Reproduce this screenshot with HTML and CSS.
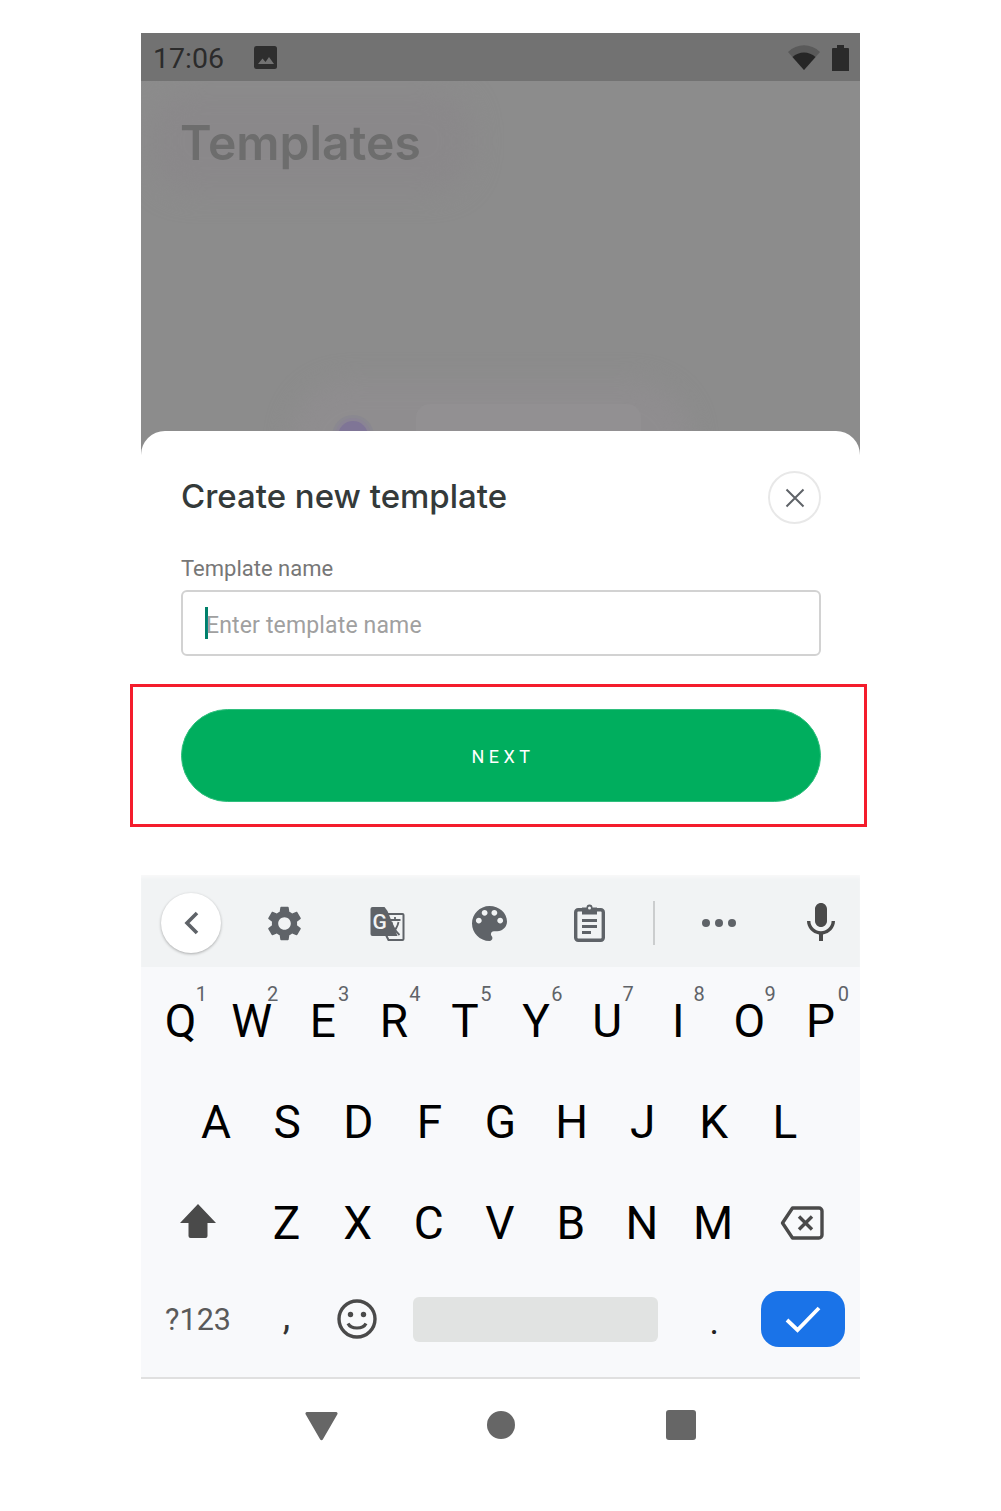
FILE: index.html
```html
<!DOCTYPE html>
<html lang="en">

<head>
  <meta charset="UTF-8">
  <meta name="viewport" content="width=device-width, initial-scale=1.0">
  <title>Create new template</title>
  <link rel="stylesheet" href="styles.css">
</head>

<body>
  <div class="phone">
    <!-- status bar -->
    <div class="status-bar">
      <span class="clock">17:06</span>
      <svg class="status-image" viewBox="0 0 23 23">
        <rect width="23" height="23" rx="2.5" fill="#2e2e2e" />
        <path d="M4 18l4.5-5.500 3 3.500 3.500-5 5 7z" fill="#727272" />
      </svg>
      <span class="status-space"></span>
      <svg class="status-wifi" viewBox="0 0 32 25">
        <path d="M0 7C9-2 23-2 32 7L16 25z" fill="#5a5a5a" />
        <path d="M4.500 12C11 6 21 6 27.500 12L16 25z" fill="#262626" />
      </svg>
      <svg class="status-battery" viewBox="0 0 17 26">
        <path d="M5 0h7v3h4a1 1 0 0 1 1 1v22H0V4a1 1 0 0 1 1-1h4z" fill="#2a2a2a" />
      </svg>
    </div>

    <!-- dimmed page behind the sheet -->
    <div class="screen">
      <div class="ghost-head"></div>
      <h1 class="screen-title">Templates</h1>
      <div class="ghost-glow"></div>
      <div class="ghost-card"></div>
      <div class="ghost-dot"></div>
    </div>

    <!-- bottom sheet -->
    <div class="sheet">
      <div class="sheet-head">
        <h2 class="sheet-title">Create new template</h2>
        <button class="close-btn">
          <svg viewBox="0 0 20 20" width="20" height="20">
            <path d="M1.500 1.500l17 17M18.500 1.500l-17 17" stroke="#5f6368" stroke-width="2" fill="none" />
          </svg>
        </button>
      </div>
      <label class="field-label">Template name</label>
      <div class="field">
        <span class="caret"></span>
        <span class="placeholder">Enter template name</span>
      </div>
      <button class="next-btn">NEXT</button>
    </div>

    <!-- keyboard -->
    <div class="toolbar">
      <div class="back-btn">
        <svg viewBox="0 0 16 24" width="16" height="24">
          <path d="M14 2L4 12l10 10" stroke="#5f6368" stroke-width="3.600" fill="none" />
        </svg>
      </div>
      <svg class="tool tool-gear" viewBox="2 2 20 20">
        <path d="M19.140 12.940c.04-.3.06-.61.06-.94 0-.32-.02-.64-.07-.94l2.030-1.580c.18-.14.23-.41.12-.61l-1.920-3.320c-.12-.22-.37-.29-.59-.22l-2.390.96c-.5-.38-1.030-.7-1.620-.94l-.36-2.540c-.04-.24-.24-.41-.48-.41h-3.840c-.24 0-.43.17-.47.41l-.36 2.540c-.59.24-1.130.57-1.620.94l-2.390-.96c-.22-.08-.47 0-.59.22L2.740 8.870c-.12.21-.08.47.12.61l2.030 1.580c-.05.3-.09.63-.09.94s.02.64.07.94l-2.030 1.580c-.18.14-.23.41-.12.61l1.920 3.320c.12.22.37.29.59.22l2.390-.96c.5.38 1.030.7 1.620.94l.36 2.540c.05.24.24.41.48.41h3.840c.24 0 .44-.17.47-.41l.36-2.540c.59-.24 1.130-.56 1.620-.94l2.390.96c.22.08.47 0 .59-.22l1.920-3.320c.12-.22.07-.47-.12-.61l-2.010-1.580zM12 15.600c-1.980 0-3.600-1.620-3.600-3.600s1.620-3.600 3.600-3.600 3.600 1.620 3.600 3.600-1.620 3.600-3.600 3.600z" fill="#5f6368" />
      </svg>
      <svg class="tool tool-translate" viewBox="0 0 34 34">
        <path d="M15 7h17a1 1 0 0 1 1 1v24a1 1 0 0 1-1 1H18l-3-6z" fill="#f1f3f4" stroke="#5f6368" stroke-width="2" />
        <path d="M2 0h12l3 4 10 25H2a2 2 0 0 1-2-2V2a2 2 0 0 1 2-2z" fill="#5f6368" />
        <text x="2" y="22" class="translate-g">G</text>
        <path d="M19 13h11M24.500 10v3M21 15c1 6 5 10 8 13M28 15c-1 6-4 9-7 12" stroke="#5f6368" stroke-width="1.800" fill="none" />
      </svg>
      <svg class="tool tool-palette" viewBox="3 3 18 18">
        <path d="M12 3c-4.970 0-9 4.030-9 9s4.030 9 9 9c.83 0 1.500-.67 1.500-1.500 0-.39-.15-.74-.39-1.010-.23-.26-.38-.61-.38-.99 0-.83.67-1.500 1.500-1.500H16c2.760 0 5-2.240 5-5 0-4.420-4.030-8-9-8zm-5.500 9c-.83 0-1.500-.67-1.500-1.500S5.670 9 6.500 9 8 9.670 8 10.500 7.330 12 6.500 12zm3-4C8.670 8 8 7.330 8 6.500S8.670 5 9.500 5s1.500.67 1.500 1.500S10.330 8 9.500 8zm5 0c-.83 0-1.500-.67-1.500-1.500S13.670 5 14.500 5s1.500.67 1.500 1.500S15.330 8 14.500 8zm3 4c-.83 0-1.500-.67-1.500-1.500S16.670 9 17.500 9s1.500.67 1.500 1.500-.67 1.500-1.500 1.500z" fill="#5f6368" />
      </svg>
      <svg class="tool tool-clip" viewBox="0 0 31 38">
        <rect x="1.700" y="5.700" width="27.600" height="30.600" rx="2.500" fill="none" stroke="#5f6368" stroke-width="3.400" />
        <path d="M8 3.500h4.500a3 3 0 0 1 6 0H23v7H8z" fill="#5f6368" />
        <circle cx="15.500" cy="4" r="1.500" fill="#f1f3f4" />
        <path d="M8 16.500h15M8 22.500h15M8 28.500h9" stroke="#5f6368" stroke-width="3" fill="none" />
      </svg>
      <span class="tool-divider"></span>
      <svg class="tool tool-dots" viewBox="0 0 34 8">
        <circle cx="4" cy="4" r="4" fill="#5f6368" />
        <circle cx="17" cy="4" r="4" fill="#5f6368" />
        <circle cx="30" cy="4" r="4" fill="#5f6368" />
      </svg>
      <svg class="tool tool-mic" viewBox="5 2 14 19">
        <path d="M12 14c1.660 0 3-1.340 3-3V5c0-1.660-1.340-3-3-3S9 3.340 9 5v6c0 1.660 1.340 3 3 3zm5.300-3c0 3-2.540 5.100-5.300 5.100S6.700 14 6.700 11H5c0 3.410 2.720 6.230 6 6.720V21h2v-3.280c3.280-.48 6-3.300 6-6.720h-1.700z" fill="#4a4a4a" />
      </svg>
    </div>

    <div class="keys">
      <div class="row">
        <div class="key">Q<span class="hint">1</span></div>
        <div class="key">W<span class="hint">2</span></div>
        <div class="key">E<span class="hint">3</span></div>
        <div class="key">R<span class="hint">4</span></div>
        <div class="key">T<span class="hint">5</span></div>
        <div class="key">Y<span class="hint">6</span></div>
        <div class="key">U<span class="hint">7</span></div>
        <div class="key">I<span class="hint">8</span></div>
        <div class="key">O<span class="hint">9</span></div>
        <div class="key">P<span class="hint">0</span></div>
      </div>
      <div class="row row-center">
        <div class="key">A</div>
        <div class="key">S</div>
        <div class="key">D</div>
        <div class="key">F</div>
        <div class="key">G</div>
        <div class="key">H</div>
        <div class="key">J</div>
        <div class="key">K</div>
        <div class="key">L</div>
      </div>
      <div class="row">
        <div class="key key-wide">
          <svg class="shift-icon" viewBox="0 0 36 34" width="36" height="34">
            <path d="M18 0l18 19h-8.500v13a2 2 0 0 1-2 2h-15a2 2 0 0 1-2-2V19H0z" fill="#4a4a4a" />
          </svg>
        </div>
        <div class="key">Z</div>
        <div class="key">X</div>
        <div class="key">C</div>
        <div class="key">V</div>
        <div class="key">B</div>
        <div class="key">N</div>
        <div class="key">M</div>
        <div class="key key-wide">
          <svg viewBox="0 0 44 34" width="44" height="34">
            <path d="M12.500 2H39a3 3 0 0 1 3 3v24a3 3 0 0 1-3 3H12.500L2.500 17z" fill="none" stroke="#4a4a4a" stroke-width="3.400" stroke-linejoin="round" />
            <path d="M19 10.500l13 13M32 10.500l-13 13" stroke="#4a4a4a" stroke-width="3.400" fill="none" />
          </svg>
        </div>
      </div>
      <div class="row row-last">
        <div class="key key-wide key-symbols">?123</div>
        <div class="key key-comma">,</div>
        <div class="key">
          <svg class="emoji-icon" viewBox="0 0 40 40" width="40" height="40">
            <circle cx="20" cy="20" r="18" fill="none" stroke="#4a4a4a" stroke-width="3.400" />
            <circle cx="13.500" cy="15.500" r="2.700" fill="#4a4a4a" />
            <circle cx="26.500" cy="15.500" r="2.700" fill="#4a4a4a" />
            <path d="M11 24.500c3 6 15 6 18 0" fill="none" stroke="#4a4a4a" stroke-width="3.200" />
          </svg>
        </div>
        <div class="key-space"><span class="space-bar"></span></div>
        <div class="key key-period">.</div>
        <div class="key key-wide">
          <span class="enter">
            <svg viewBox="0 0 36 28" width="36" height="28">
              <path d="M2 15l10.500 10L34 3" fill="none" stroke="#fff" stroke-width="3.800" />
            </svg>
          </span>
        </div>
      </div>
    </div>

    <!-- nav bar -->
    <div class="nav-bar">
      <svg class="nav-back" viewBox="0 0 33 29" width="33" height="29">
        <path d="M2 0h29a1.500 1.500 0 0 1 1.400 2.200L17.800 27.600a1.500 1.500 0 0 1-2.600 0L.6 2.200A1.500 1.500 0 0 1 2 0z" fill="#666" />
      </svg>
      <span class="nav-circle"></span>
      <span class="nav-square"></span>
    </div>

    <!-- annotation over the button -->
    <div class="highlight"></div>
  </div>
</body>

</html>
```

FILE: styles.css
```css
* {
  box-sizing: border-box;
}

body {
  margin: 0;
  background: white;
  font-family: 'Roboto', sans-serif;
}

.phone {
  position: relative;
  width: 719px;
  margin: 33px 0 0 141px;
  display: flex;
  flex-direction: column;
}

.status-bar {
  height: 48px;
  background: #727272;
  display: flex;
  align-items: center;
  padding: 2px 11px 0 12px;
}

.clock {
  font-size: 28.500px;
  color: #2b2b2b;
  width: 101px;
}

.status-image {
  width: 23px;
  height: 23px;
  margin-top: -2px;
}

.status-space {
  flex: 1;
}

.status-wifi {
  width: 32px;
  height: 25px;
  margin-right: 12px;
  margin-top: -2px;
}

.status-battery {
  width: 17px;
  height: 26px;
  margin-top: -1px;
}

.screen {
  position: relative;
  height: 374px;
  background: #8c8c8c;
  overflow: hidden;
  padding: 34px 39px 0;
}

.screen-title {
  position: relative;
  margin: 0;
  font-family: 'Inter', sans-serif;
  font-size: 48px;
  font-weight: 600;
  line-height: 56px;
  color: #6d6d6d;
  filter: blur(.6px);
}

.ghost-head {
  position: absolute;
  left: 10px;
  top: 10px;
  width: 320px;
  height: 100px;
  border-radius: 40px;
  background: #8a888a;
  filter: blur(14px);
}

.ghost-glow {
  position: absolute;
  left: 150px;
  top: 300px;
  width: 400px;
  height: 120px;
  border-radius: 60px;
  background: #8f8d8f;
  filter: blur(12px);
}

.ghost-card {
  position: absolute;
  left: 275px;
  top: 323px;
  width: 225px;
  height: 60px;
  border-radius: 14px;
  background: #929092;
}

.ghost-dot {
  position: absolute;
  left: 197px;
  top: 340px;
  width: 30px;
  height: 30px;
  border-radius: 50%;
  background: #7f7596;
  box-shadow: 0 0 0 3px #8a8494, 0 0 0 6px #8a8890;
}

.sheet {
  background: white;
  height: 444px;
  margin-top: -24px;
  border-radius: 24px 24px 0 0;
  padding: 40px 39px 0 40px;
  position: relative;
}

.sheet-head {
  display: flex;
  align-items: center;
  justify-content: space-between;
  height: 53px;
}

.sheet-title {
  margin: 0 0 4px;
  font-family: 'Inter', sans-serif;
  font-size: 33px;
  font-weight: 500;
  color: #343a3a;
}

.close-btn {
  width: 53px;
  height: 53px;
  padding: 0;
  background: white;
  border: 2px solid #e8e8e8;
  border-radius: 50%;
  display: flex;
  align-items: center;
  justify-content: center;
}

.field-label {
  display: block;
  margin-top: 30px;
  font-size: 22px;
  line-height: 30px;
  color: #777;
}

.field {
  margin-top: 6px;
  height: 66px;
  border: 2px solid #d2d2d2;
  border-radius: 6px;
  display: flex;
  align-items: center;
  padding: 4px 0 0 22px;
}

.caret {
  width: 3px;
  height: 32px;
  margin-top: -4px;
  background: #00806a;
  margin-right: -2px;
}

.placeholder {
  font-size: 23px;
  letter-spacing: .15px;
  color: #a0a0a0;
}

.next-btn {
  display: block;
  width: 100%;
  height: 93px;
  margin-top: 53px;
  padding: 2px 0 0 4px;
  background: #00ae5e;
  border: 1px solid #2fbf7d;
  border-radius: 47px;
  color: white;
  font-family: 'Roboto', sans-serif;
  font-size: 18px;
  font-weight: 400;
  letter-spacing: 4.500px;
}

.highlight {
  position: absolute;
  left: -11px;
  top: 651px;
  width: 737px;
  height: 143px;
  border: 3px solid #f41c2c;
}

.toolbar {
  position: relative;
  height: 92px;
  background: #f1f3f4;
  box-shadow: inset 0 4px 4px -2px #fafafa;
}

/* toolbar items sit on a strip, each at its own spot */
.back-btn {
  position: absolute;
  left: 20px;
  top: 18px;
  width: 60px;
  height: 60px;
  border-radius: 50%;
  background: white;
  box-shadow: 0 1px 3px rgba(0, 0, 0, .3);
  display: flex;
  align-items: center;
  justify-content: center;
}

.tool {
  position: absolute;
}

.tool-gear {
  left: 126px;
  top: 31px;
  width: 35px;
  height: 35px;
}

.tool-translate {
  left: 229px;
  top: 32px;
  width: 35px;
  height: 34px;
}

.translate-g {
  font-family: 'Roboto', sans-serif;
  font-size: 21px;
  font-weight: 500;
  fill: #f1f3f4;
}

.tool-palette {
  left: 331px;
  top: 31px;
  width: 35px;
  height: 35px;
}

.tool-clip {
  left: 433px;
  top: 29px;
  width: 31px;
  height: 38px;
}

.tool-divider {
  position: absolute;
  left: 512px;
  top: 26px;
  width: 2px;
  height: 44px;
  background: #cbcdce;
}

.tool-dots {
  left: 561px;
  top: 44px;
  width: 34px;
  height: 8px;
}

.tool-mic {
  left: 666px;
  top: 28px;
  width: 28px;
  height: 38px;
}

.keys {
  background: #f8f9fb;
  height: 412px;
  padding: 3px 4px 0;
  border-bottom: 2px solid #e0e0e0;
}

.row {
  display: flex;
  height: 101px;
}

.row-center {
  justify-content: center;
}

.row-last {
  height: 92px;
}

.key {
  position: relative;
  flex: 0 0 71.100px;
  display: flex;
  align-items: center;
  justify-content: center;
  font-size: 46px;
  color: black;
}

.key-wide {
  flex: 0 0 106px;
}

.key-symbols {
  font-size: 30.500px;
  color: #5a5a5a;
}

.key-comma {
  font-size: 38px;
  color: #333;
  padding-bottom: 7px;
}

.key-period {
  font-size: 36px;
  color: #222;
  padding-top: 5px;
}

.emoji-icon {
  margin-right: 2px;
}

.key-space {
  flex: 0 0 285.500px;
  display: flex;
  align-items: center;
  justify-content: center;
}

.space-bar {
  width: 245px;
  height: 45px;
  border-radius: 6px;
  background: #e1e3e2;
}

.enter {
  width: 84px;
  height: 56px;
  border-radius: 18px;
  background: #1a73e8;
  display: flex;
  align-items: center;
  justify-content: center;
}

.shift-icon {
  margin-bottom: 3px;
}

.hint {
  position: absolute;
  top: 12px;
  right: 9px;
  font-size: 20px;
  color: #5f6368;
}

.key:last-child .hint {
  right: 7px;
}

.nav-bar {
  height: 92px;
  background: white;
  display: flex;
  align-items: center;
  justify-content: center;
  gap: 150px;
}

.nav-back {
  margin-top: 2px;
}

.nav-circle {
  width: 28px;
  height: 28px;
  margin-left: -1px;
  border-radius: 50%;
  background: #666;
}

.nav-square {
  width: 30px;
  height: 30px;
  margin-left: 1px;
  border-radius: 3px;
  background: #666;
}
```
